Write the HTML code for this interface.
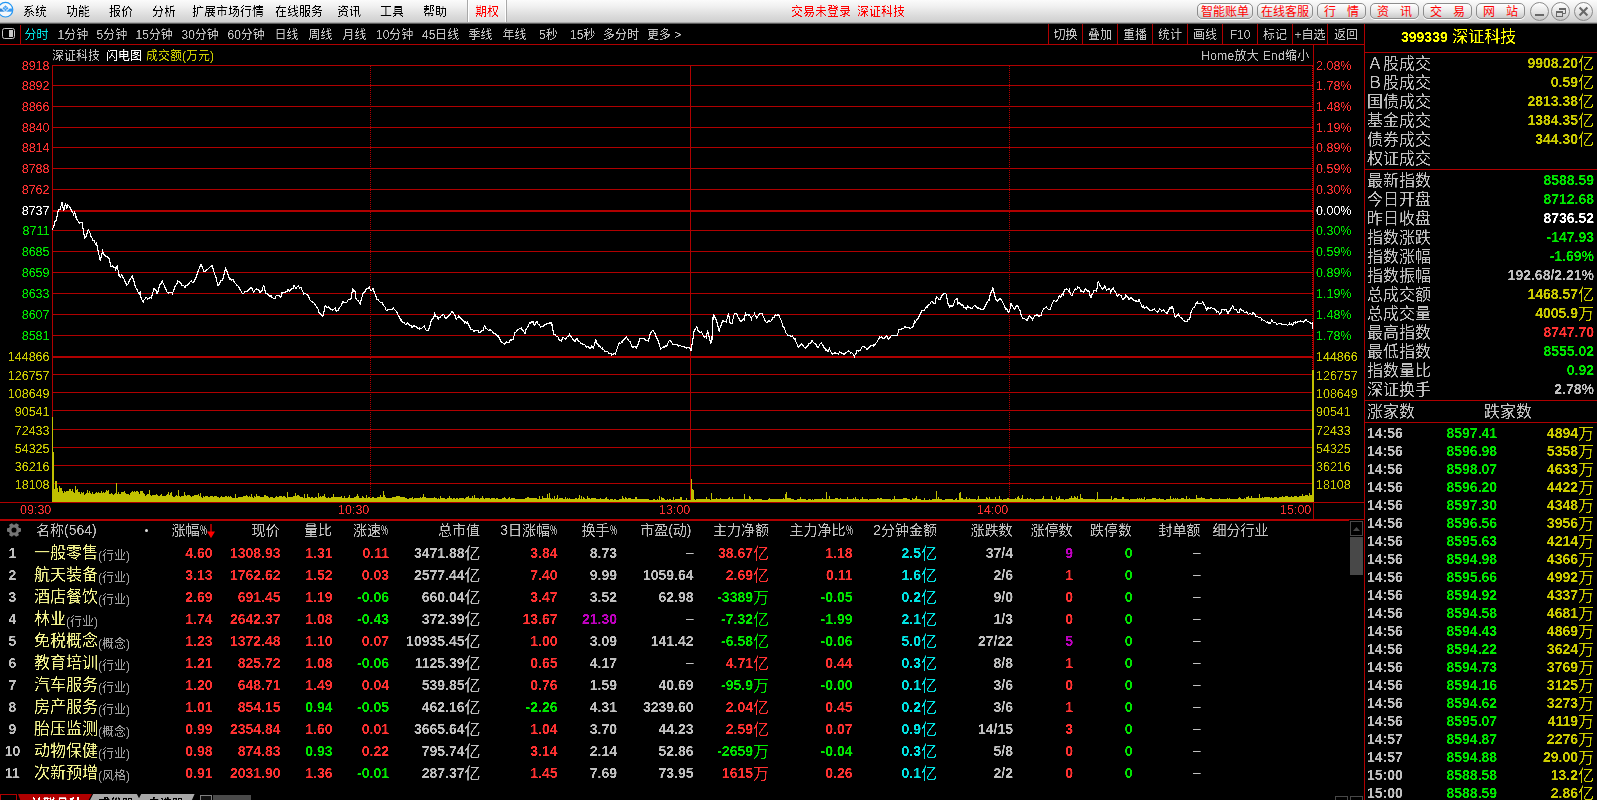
<!DOCTYPE html><html lang="zh-CN"><head><meta charset="utf-8"><title>深证科技 分时</title><style>
*{margin:0;padding:0;box-sizing:border-box}
html,body{width:1597px;height:800px;overflow:hidden;background:#000}
body{position:relative;font-family:"Liberation Sans","Noto Sans CJK SC",sans-serif;color:#c0c0c0}
.t{position:absolute;white-space:nowrap}
.s12{font-size:12px;line-height:14px;height:14px}
.s14{font-size:14px;line-height:16px;height:16px}
.s16{font-size:16px;line-height:18px;height:18px}
.b{font-weight:bold;font-family:"Liberation Sans","Noto Sans CJK SC",sans-serif}
.ax{font-size:12.5px;line-height:14px;height:14px}
.w{color:#fff}.g{color:#c0c0c0}.r{color:#ff3232}.gr{color:#00e600}.y{color:#cccc00}.yy{color:#ffff00}.c{color:#00e4e4}.m{color:#c000c0}.k{color:#000}.ny{color:#f0f08c}.rr{color:#ff0000}
.hl{position:absolute;background:#b00000;height:1px}
.vl{position:absolute;background:#b00000;width:1px}
#menubar{position:absolute;left:0;top:0;width:1597px;height:24px;background:linear-gradient(#fbfbfb 0,#f1f1f1 6px,#e6e6e6 11px,#d9d9d9 17px,#d0d0d0 22px,#acacac 22px,#acacac 23px,#5c5c5c 23px,#5c5c5c 24px)}
.btn{position:absolute;top:3px;height:16px;border:1px solid #8c8c8c;border-radius:5px;background:linear-gradient(#ffffff,#e8e8e8 55%,#cacaca);box-shadow:0 1px 0 #fff;color:#f00;font-size:12px;line-height:15px;text-align:center;padding-top:1px;white-space:nowrap}
.cir{position:absolute;top:1.6px;width:19px;height:19px;border:1px solid #8a8a8a;border-radius:10px;background:linear-gradient(#ffffff,#e0e0e0 60%,#c4c4c4)}
</style></head><body>
<div id="menubar">
<svg style="position:absolute;left:0;top:0" width="16" height="22" viewBox="0 0 16 22"><defs><clipPath id="lc"><circle cx="5.5" cy="9.7" r="7.3"/></clipPath><linearGradient id="lg" x1="0" y1="0" x2="1" y2="0"><stop offset="0" stop-color="#2a6cb8"/><stop offset="0.5" stop-color="#3f9ff2"/><stop offset="1" stop-color="#2f97f5"/></linearGradient></defs><circle cx="5.5" cy="9.7" r="7.3" fill="#f6f8fb" stroke="#2196f3" stroke-width="1.15"/><g clip-path="url(#lc)"><rect x="-3" y="8.5" width="17" height="3.2" fill="url(#lg)"/><path d="M5.5 4.4L9.6 8.5 5.5 12.6 1.4 8.5Z" fill="#f6f8fb"/><path d="M5.5 5.2L8.6 8.3 5.5 11.4 2.4 8.3Z" fill="#4aa3f3"/><path d="M4 6.8l3 3M7 6.8l-3 3" stroke="#d8ecff" stroke-width="0.5"/></g></svg>
<div style="position:absolute;left:467px;top:0;width:40px;height:22px;background:linear-gradient(#fcfcfc,#f0f0f0 50%,#dfdfdf);border-left:1px solid #a8a8a8;border-right:1px solid #a8a8a8;box-shadow:inset 1px 0 0 #fff,inset -1px 0 0 #fff"></div>
<div class="btn" style="left:1197px;width:56px">智能账单</div>
<div class="btn" style="left:1257px;width:56px">在线客服</div>
<div class="btn" style="left:1317px;width:49px">行<span style="display:inline-block;width:11px"></span>情</div>
<div class="btn" style="left:1370px;width:49px">资<span style="display:inline-block;width:11px"></span>讯</div>
<div class="btn" style="left:1423px;width:49px">交<span style="display:inline-block;width:11px"></span>易</div>
<div class="btn" style="left:1476px;width:49px">网<span style="display:inline-block;width:11px"></span>站</div>
<div class="cir" style="left:1529.5px">
<svg width="17" height="17" viewBox="0 0 17 17" style="position:absolute;left:0;top:0"><rect x="4" y="11" width="9" height="2" fill="#686868"/></svg>
</div>
<div class="cir" style="left:1550.5px">
<svg width="17" height="17" viewBox="0 0 17 17" style="position:absolute;left:0;top:0"><path d="M7.5 6.5v-1h6v5h-2.5" fill="none" stroke="#686868" stroke-width="1"/><rect x="7" y="5" width="7" height="2" fill="#686868"/><rect x="4.5" y="8.5" width="6" height="5" fill="none" stroke="#686868" stroke-width="1"/><rect x="4" y="8" width="7" height="2" fill="#686868"/></svg>
</div>
<div class="cir" style="left:1573.5px">
<svg width="17" height="17" viewBox="0 0 17 17" style="position:absolute;left:0;top:0"><path d="M4.6 4.6l7.8 7.8M12.4 4.6l-7.8 7.8" stroke="#686868" stroke-width="2.1"/></svg>
</div>
</div>
<svg style="position:absolute;left:2px;top:28px" width="14" height="12" viewBox="0 0 14 12"><rect x="0.5" y="0.5" width="12" height="10" rx="2" fill="none" stroke="#c8c8c8" stroke-width="1"/><rect x="7" y="2" width="4" height="7" fill="#c8c8c8"/></svg>
<div class="vl" style="left:20px;top:25px;height:19px;width:1px"></div>
<div class="vl" style="left:1048px;top:24px;height:20px;width:1px"></div>
<div class="vl" style="left:1082px;top:24px;height:20px;width:1px"></div>
<div class="vl" style="left:1117px;top:24px;height:20px;width:1px"></div>
<div class="vl" style="left:1152px;top:24px;height:20px;width:1px"></div>
<div class="vl" style="left:1187px;top:24px;height:20px;width:1px"></div>
<div class="vl" style="left:1222px;top:24px;height:20px;width:1px"></div>
<div class="vl" style="left:1257px;top:24px;height:20px;width:1px"></div>
<div class="vl" style="left:1292px;top:24px;height:20px;width:1px"></div>
<div class="vl" style="left:1327px;top:24px;height:20px;width:1px"></div>
<div class="hl" style="left:0px;top:44px;width:1365px;height:1px"></div>
<svg style="position:absolute;left:0;top:0" width="1597" height="800" viewBox="0 0 1597 800" shape-rendering="crispEdges"><rect x="52" y="65" width="1261" height="1" fill="#b00000"/><rect x="52" y="85" width="1261" height="1" fill="#b00000"/><rect x="52" y="106" width="1261" height="1" fill="#b00000"/><rect x="52" y="127" width="1261" height="1" fill="#b00000"/><rect x="52" y="147" width="1261" height="1" fill="#b00000"/><rect x="52" y="168" width="1261" height="1" fill="#b00000"/><rect x="52" y="189" width="1261" height="1" fill="#b00000"/><rect x="52" y="210" width="1261" height="2" fill="#b00000"/><rect x="52" y="230" width="1261" height="1" fill="#b00000"/><rect x="52" y="251" width="1261" height="1" fill="#b00000"/><rect x="52" y="272" width="1261" height="1" fill="#b00000"/><rect x="52" y="293" width="1261" height="1" fill="#b00000"/><rect x="52" y="314" width="1261" height="1" fill="#b00000"/><rect x="52" y="335" width="1261" height="1" fill="#b00000"/><rect x="52" y="356" width="1261" height="2" fill="#b00000"/><rect x="52" y="374" width="1261" height="1" fill="#b00000"/><rect x="52" y="392" width="1261" height="1" fill="#b00000"/><rect x="52" y="410" width="1261" height="1" fill="#b00000"/><rect x="52" y="429" width="1261" height="1" fill="#b00000"/><rect x="52" y="447" width="1261" height="1" fill="#b00000"/><rect x="52" y="465" width="1261" height="1" fill="#b00000"/><rect x="52" y="483" width="1261" height="1" fill="#b00000"/><rect x="0" y="502" width="1365" height="1" fill="#b00000"/><rect x="0" y="519" width="1365" height="2" fill="#b00000"/><rect x="52" y="65" width="1" height="438" fill="#b00000"/><rect x="1313" y="44" width="1" height="476" fill="#b00000"/><rect x="690" y="65" width="1" height="438" fill="#b00000"/><line x1="370.5" y1="66" x2="370.5" y2="502" stroke="#b00000" stroke-width="1" stroke-dasharray="1 1"/><line x1="1009.5" y1="66" x2="1009.5" y2="502" stroke="#b00000" stroke-width="1" stroke-dasharray="1 1"/><line x1="1312.5" y1="66" x2="1312.5" y2="502" stroke="#e00000" stroke-width="1" stroke-dasharray="1 1"/><path d="M52 502V417h1V452h1V489h1V481h1V481h1V488h1V492h1V486h1V488h1V488h1V491h1V493h1V491h1V492h1V491h1V491h1V491h1V489h1V489h1V491h1V489h1V492h1V493h1V486h1V490h1V489h1V492h1V492h1V494h1V492h1V493h1V492h1V495h1V494h1V493h1V490h1V493h1V491h1V493h1V494h1V492h1V494h1V494h1V493h1V492h1V493h1V492h1V493h1V493h1V491h1V493h1V492h1V493h1V492h1V490h1V491h1V490h1V494h1V494h1V493h1V494h1V495h1V494h1V493h1V483h1V494h1V492h1V494h1V494h1V492h1V492h1V492h1V491h1V493h1V494h1V494h1V494h1V495h1V493h1V492h1V491h1V492h1V491h1V492h1V491h1V491h1V492h1V494h1V491h1V491h1V491h1V493h1V494h1V496h1V495h1V494h1V494h1V490h1V495h1V496h1V495h1V495h1V495h1V495h1V494h1V495h1V496h1V496h1V495h1V494h1V496h1V496h1V496h1V496h1V495h1V494h1V492h1V495h1V493h1V492h1V496h1V497h1V497h1V496h1V495h1V496h1V490h1V496h1V497h1V496h1V496h1V496h1V492h1V495h1V496h1V495h1V495h1V495h1V496h1V497h1V496h1V496h1V495h1V495h1V495h1V495h1V494h1V496h1V493h1V497h1V498h1V496h1V497h1V496h1V496h1V496h1V497h1V497h1V496h1V496h1V496h1V497h1V496h1V496h1V496h1V497h1V497h1V498h1V497h1V496h1V497h1V497h1V497h1V496h1V496h1V497h1V496h1V497h1V496h1V497h1V498h1V498h1V498h1V494h1V498h1V498h1V497h1V497h1V497h1V497h1V497h1V496h1V496h1V496h1V495h1V496h1V497h1V496h1V497h1V494h1V497h1V498h1V496h1V497h1V494h1V496h1V496h1V496h1V497h1V497h1V497h1V497h1V495h1V495h1V496h1V496h1V497h1V498h1V497h1V497h1V497h1V498h1V498h1V497h1V496h1V497h1V497h1V496h1V496h1V496h1V497h1V496h1V496h1V497h1V498h1V492h1V497h1V497h1V497h1V497h1V497h1V496h1V496h1V493h1V496h1V495h1V495h1V496h1V497h1V497h1V497h1V498h1V494h1V498h1V498h1V494h1V497h1V497h1V498h1V497h1V497h1V498h1V498h1V497h1V497h1V498h1V493h1V497h1V496h1V497h1V496h1V496h1V494h1V497h1V498h1V498h1V497h1V498h1V498h1V497h1V497h1V494h1V497h1V497h1V497h1V497h1V497h1V497h1V497h1V496h1V498h1V498h1V496h1V498h1V498h1V498h1V497h1V495h1V498h1V498h1V498h1V498h1V497h1V497h1V496h1V494h1V496h1V498h1V498h1V498h1V496h1V497h1V498h1V498h1V495h1V498h1V497h1V497h1V498h1V498h1V497h1V497h1V498h1V498h1V498h1V497h1V497h1V497h1V495h1V497h1V497h1V491h1V495h1V497h1V498h1V498h1V498h1V498h1V498h1V498h1V497h1V497h1V497h1V497h1V496h1V496h1V496h1V496h1V497h1V497h1V497h1V497h1V497h1V498h1V498h1V499h1V499h1V498h1V498h1V498h1V497h1V499h1V498h1V498h1V498h1V498h1V498h1V498h1V497h1V498h1V497h1V494h1V497h1V497h1V498h1V498h1V498h1V498h1V498h1V498h1V498h1V498h1V497h1V498h1V498h1V499h1V498h1V499h1V496h1V498h1V498h1V498h1V498h1V499h1V499h1V498h1V498h1V496h1V498h1V498h1V499h1V498h1V498h1V499h1V498h1V498h1V499h1V498h1V498h1V498h1V498h1V498h1V499h1V498h1V497h1V497h1V496h1V498h1V498h1V498h1V496h1V498h1V495h1V498h1V498h1V498h1V498h1V499h1V498h1V498h1V496h1V498h1V499h1V498h1V498h1V498h1V498h1V498h1V499h1V498h1V498h1V498h1V498h1V499h1V498h1V498h1V499h1V499h1V499h1V499h1V498h1V498h1V497h1V498h1V499h1V499h1V498h1V497h1V499h1V498h1V498h1V498h1V498h1V499h1V499h1V499h1V499h1V499h1V499h1V499h1V499h1V499h1V499h1V498h1V498h1V497h1V497h1V498h1V498h1V498h1V498h1V498h1V498h1V498h1V498h1V499h1V499h1V496h1V499h1V499h1V496h1V498h1V498h1V498h1V498h1V494h1V498h1V493h1V498h1V499h1V498h1V499h1V496h1V499h1V498h1V495h1V499h1V498h1V498h1V498h1V498h1V499h1V499h1V497h1V499h1V498h1V499h1V498h1V499h1V499h1V499h1V499h1V499h1V498h1V498h1V499h1V498h1V495h1V499h1V496h1V499h1V497h1V498h1V499h1V499h1V496h1V498h1V498h1V499h1V498h1V498h1V498h1V498h1V498h1V499h1V499h1V499h1V499h1V498h1V499h1V499h1V499h1V499h1V498h1V497h1V499h1V499h1V500h1V499h1V499h1V499h1V500h1V499h1V499h1V500h1V500h1V500h1V499h1V499h1V499h1V496h1V498h1V499h1V497h1V498h1V499h1V498h1V498h1V498h1V499h1V499h1V499h1V499h1V497h1V497h1V499h1V499h1V499h1V499h1V499h1V499h1V499h1V499h1V499h1V499h1V499h1V499h1V500h1V500h1V500h1V500h1V499h1V499h1V500h1V500h1V499h1V500h1V496h1V500h1V497h1V498h1V498h1V499h1V500h1V500h1V499h1V500h1V499h1V499h1V500h1V500h1V497h1V500h1V499h1V499h1V499h1V499h1V499h1V497h1V497h1V500h1V500h1V500h1V500h1V498h1V500h1V500h1V500h1V500h1V479h1V489h1V490h1V499h1V500h1V499h1V499h1V499h1V499h1V499h1V499h1V499h1V499h1V499h1V499h1V497h1V499h1V499h1V499h1V500h1V493h1V499h1V499h1V499h1V499h1V498h1V499h1V499h1V499h1V498h1V499h1V499h1V499h1V499h1V499h1V499h1V499h1V498h1V497h1V499h1V499h1V497h1V499h1V499h1V499h1V499h1V499h1V499h1V499h1V499h1V499h1V499h1V499h1V494h1V499h1V499h1V499h1V499h1V496h1V497h1V499h1V499h1V500h1V499h1V499h1V499h1V499h1V499h1V499h1V499h1V499h1V500h1V500h1V500h1V500h1V500h1V500h1V499h1V498h1V499h1V499h1V499h1V499h1V499h1V499h1V499h1V499h1V499h1V499h1V499h1V499h1V499h1V498h1V499h1V494h1V492h1V498h1V498h1V498h1V498h1V499h1V499h1V499h1V500h1V500h1V500h1V499h1V499h1V499h1V497h1V499h1V499h1V499h1V499h1V499h1V500h1V500h1V499h1V499h1V499h1V500h1V499h1V500h1V499h1V499h1V499h1V499h1V499h1V499h1V499h1V499h1V498h1V499h1V499h1V499h1V492h1V499h1V499h1V496h1V499h1V499h1V499h1V499h1V499h1V498h1V498h1V498h1V499h1V499h1V498h1V499h1V499h1V499h1V499h1V499h1V499h1V497h1V499h1V499h1V499h1V499h1V499h1V498h1V499h1V497h1V499h1V499h1V499h1V500h1V499h1V499h1V497h1V499h1V499h1V499h1V499h1V499h1V500h1V499h1V499h1V499h1V499h1V499h1V499h1V499h1V499h1V498h1V498h1V499h1V498h1V498h1V499h1V499h1V499h1V499h1V499h1V499h1V499h1V499h1V499h1V500h1V499h1V499h1V496h1V499h1V499h1V499h1V499h1V499h1V499h1V499h1V499h1V498h1V498h1V498h1V498h1V499h1V499h1V499h1V500h1V500h1V498h1V499h1V499h1V498h1V496h1V499h1V499h1V499h1V499h1V500h1V500h1V500h1V498h1V500h1V500h1V500h1V500h1V499h1V500h1V500h1V499h1V499h1V499h1V499h1V491h1V499h1V497h1V499h1V499h1V499h1V500h1V500h1V500h1V499h1V499h1V499h1V499h1V499h1V499h1V499h1V499h1V500h1V500h1V499h1V498h1V500h1V500h1V493h1V492h1V498h1V498h1V499h1V499h1V499h1V497h1V499h1V499h1V498h1V499h1V499h1V499h1V499h1V499h1V499h1V500h1V499h1V496h1V499h1V499h1V499h1V499h1V499h1V499h1V499h1V497h1V498h1V499h1V497h1V499h1V499h1V499h1V499h1V499h1V497h1V499h1V499h1V499h1V496h1V499h1V499h1V500h1V499h1V499h1V499h1V499h1V498h1V498h1V499h1V499h1V499h1V499h1V499h1V499h1V498h1V499h1V497h1V496h1V498h1V499h1V498h1V495h1V499h1V499h1V499h1V499h1V498h1V499h1V499h1V498h1V499h1V499h1V499h1V500h1V499h1V499h1V499h1V499h1V499h1V499h1V499h1V498h1V496h1V499h1V499h1V499h1V499h1V499h1V499h1V499h1V496h1V499h1V500h1V500h1V500h1V497h1V499h1V498h1V496h1V499h1V499h1V499h1V499h1V500h1V499h1V499h1V499h1V499h1V498h1V498h1V496h1V498h1V498h1V496h1V497h1V498h1V496h1V499h1V499h1V494h1V498h1V498h1V499h1V499h1V499h1V499h1V499h1V499h1V499h1V499h1V499h1V499h1V499h1V499h1V500h1V499h1V492h1V499h1V499h1V499h1V499h1V499h1V499h1V499h1V499h1V499h1V499h1V499h1V499h1V499h1V496h1V500h1V499h1V498h1V498h1V498h1V499h1V499h1V499h1V499h1V499h1V497h1V497h1V499h1V499h1V499h1V499h1V499h1V500h1V499h1V499h1V499h1V499h1V499h1V499h1V499h1V498h1V499h1V498h1V499h1V498h1V499h1V499h1V497h1V500h1V499h1V499h1V499h1V499h1V499h1V499h1V498h1V498h1V498h1V498h1V499h1V499h1V499h1V498h1V499h1V499h1V499h1V499h1V500h1V500h1V499h1V499h1V499h1V499h1V496h1V499h1V499h1V498h1V499h1V498h1V499h1V498h1V499h1V499h1V499h1V498h1V498h1V498h1V499h1V499h1V496h1V499h1V499h1V498h1V499h1V499h1V499h1V499h1V499h1V499h1V495h1V498h1V498h1V498h1V498h1V497h1V498h1V498h1V498h1V499h1V499h1V499h1V499h1V499h1V498h1V498h1V499h1V499h1V499h1V499h1V499h1V499h1V499h1V498h1V499h1V499h1V499h1V499h1V499h1V499h1V499h1V498h1V499h1V498h1V499h1V499h1V499h1V499h1V499h1V499h1V499h1V499h1V498h1V497h1V498h1V499h1V499h1V499h1V498h1V499h1V497h1V497h1V496h1V498h1V498h1V496h1V498h1V498h1V498h1V498h1V498h1V498h1V498h1V494h1V498h1V498h1V497h1V498h1V497h1V497h1V497h1V497h1V497h1V497h1V498h1V497h1V498h1V498h1V497h1V497h1V497h1V498h1V498h1V497h1V497h1V497h1V496h1V497h1V497h1V496h1V496h1V496h1V497h1V497h1V497h1V496h1V497h1V497h1V496h1V496h1V496h1V497h1V497h1V496h1V496h1V496h1V494h1V496h1V496h1V495h1V495h1V495h1V496h1V493h1V495h1V495h1V370h1V370h1V502Z" fill="#c0c000"/><path d="M52.2 229.7L52.2 229.8L53.5 227.2L54.7 223.1L54.8 222.1L56.1 220.3L56.6 218.4L57.4 214.3L58.4 210.0L58.8 209.5L60.1 209.8L60.3 208.1L61.4 204.8L62.2 202.1L62.7 205.3L63.5 210.9L64.0 209.4L65.3 204.2L65.4 202.9L66.6 207.1L66.9 208.1L67.8 204.4L67.9 205.0L69.2 206.1L70.5 208.7L70.6 209.1L71.9 211.3L73.2 213.2L73.4 214.7L74.5 212.2L74.9 212.8L75.8 215.4L76.2 218.4L77.1 219.7L78.4 221.8L79.1 223.1L79.7 222.7L81.0 222.5L81.9 222.2L82.3 223.6L83.6 232.0L84.7 238.1L85.0 237.9L86.3 236.2L86.5 235.3L87.6 231.5L88.4 229.7L88.9 230.8L90.2 233.5L90.3 235.3L91.5 237.3L92.8 238.7L93.1 240.9L94.1 240.9L95.4 244.1L96.7 242.9L96.9 244.7L98.1 250.8L99.4 256.8L100.2 260.6L100.7 258.4L102.0 253.4L102.5 250.9L103.3 253.0L104.4 255.0L104.6 255.9L105.9 256.0L107.2 256.8L108.5 257.9L109.0 258.7L109.8 261.3L110.9 266.2L111.2 266.2L112.5 266.0L113.8 267.8L114.7 267.2L115.1 267.4L115.6 270.9L116.4 267.4L117.1 265.9L117.7 268.2L119.0 275.6L119.0 274.0L120.3 277.6L121.6 275.0L122.9 277.2L123.1 277.5L124.3 279.4L125.6 283.6L126.9 283.5L126.9 285.0L128.2 283.7L129.5 280.3L130.8 278.6L132.1 276.1L132.5 276.0L133.4 280.0L134.7 283.7L135.3 286.8L136.0 287.9L137.4 290.3L138.7 293.5L140.0 292.4L140.0 294.3L141.3 298.4L142.6 301.1L143.2 301.8L143.9 300.2L145.2 298.6L145.6 297.7L146.5 297.4L147.8 299.1L149.1 298.1L150.5 297.9L151.2 298.1L151.8 296.0L153.1 291.7L154.0 288.7L154.4 289.0L155.7 289.9L157.0 293.5L157.8 292.8L158.3 289.9L159.6 285.0L160.9 284.0L162.1 280.8L162.2 281.0L163.6 284.4L164.9 287.0L166.2 290.0L167.2 292.5L167.5 292.7L168.8 293.2L170.1 292.2L171.4 292.2L172.7 294.0L172.8 292.5L174.0 289.8L175.3 285.4L176.7 284.7L177.5 280.8L178.0 281.8L179.3 282.0L180.6 282.8L181.9 285.1L183.2 285.5L184.5 286.5L185.0 287.8L185.8 285.9L187.1 285.1L188.4 284.8L189.8 282.2L190.6 281.6L191.1 280.7L192.4 282.8L193.4 282.7L193.7 282.1L195.0 279.5L196.3 276.6L197.6 272.5L198.9 269.3L200.2 266.3L200.9 264.7L201.5 265.1L202.9 268.9L204.2 272.0L204.6 271.8L205.5 271.2L206.8 269.9L208.1 268.8L209.4 267.4L210.7 266.3L212.0 265.6L212.1 265.8L213.3 269.3L214.6 274.0L216.0 277.5L217.3 283.3L218.1 285.9L218.6 285.3L219.9 282.7L221.2 280.2L222.4 280.3L222.5 279.9L223.8 275.9L225.1 269.7L225.6 268.5L226.4 270.2L227.7 273.4L229.1 277.7L229.9 279.3L230.4 278.6L231.7 280.0L232.7 279.3L233.0 279.5L234.3 282.2L235.6 283.4L236.9 285.1L238.2 286.0L239.5 288.4L240.8 290.6L242.2 293.2L243.1 294.0L243.5 293.9L244.8 292.0L245.9 291.5L246.1 291.7L247.4 291.2L248.7 289.5L250.0 288.7L250.0 288.4L251.3 287.2L251.6 287.3L252.6 290.2L253.8 292.1L253.9 292.3L255.3 289.6L256.6 289.0L256.6 288.7L257.9 289.6L259.2 290.8L259.9 292.1L260.5 292.4L261.8 290.7L262.4 289.4L263.1 286.7L263.7 285.5L264.4 288.1L265.7 292.9L265.8 292.8L267.0 293.4L268.4 294.9L269.7 296.6L270.6 296.9L271.0 295.7L272.3 297.7L273.6 298.5L274.7 298.3L274.9 298.5L276.2 295.8L277.5 295.5L277.5 295.7L278.8 295.4L280.1 297.0L280.9 296.9L281.5 295.1L281.9 292.8L282.8 293.0L284.1 292.2L285.0 292.8L285.4 292.0L286.7 291.8L287.8 290.0L288.0 289.4L289.3 291.1L289.9 291.0L290.6 290.4L291.9 288.1L293.2 288.3L294.0 285.5L294.6 286.1L295.9 288.8L296.7 288.0L297.2 286.4L298.5 286.0L299.8 288.2L300.9 287.3L301.1 288.2L302.4 290.5L303.7 293.7L303.9 294.2L305.0 293.0L306.3 294.3L307.7 294.3L307.7 295.1L309.0 297.7L309.8 299.7L310.3 300.7L311.6 301.2L312.9 302.4L313.2 302.4L314.2 303.2L315.5 305.1L316.8 307.2L317.4 307.9L318.1 309.4L319.4 313.5L320.1 314.1L320.8 313.7L322.1 316.2L323.3 315.2L323.4 314.1L324.7 308.1L324.9 306.1L326.0 305.8L327.3 307.9L328.6 307.0L329.0 307.0L329.9 308.2L331.2 309.7L332.5 310.3L332.5 309.8L333.9 309.0L335.2 307.8L335.2 309.3L336.5 311.0L337.8 310.4L338.0 311.1L339.1 308.5L340.4 306.4L341.7 305.4L342.1 303.1L343.0 301.6L344.3 302.9L345.6 302.2L346.2 302.4L347.0 302.2L348.3 299.3L349.6 299.2L350.9 299.0L351.0 298.3L352.2 291.0L352.4 288.3L353.5 291.0L354.8 290.9L355.2 292.1L356.1 299.0L356.1 299.1L357.4 300.6L358.7 301.2L360.0 303.8L360.1 302.5L361.4 299.5L362.7 294.5L362.7 294.2L364.0 292.2L365.3 291.2L365.5 290.0L366.6 288.5L367.9 288.7L369.2 287.4L369.3 287.3L370.5 289.9L371.0 291.0L371.8 290.2L373.0 288.3L373.2 288.9L374.5 292.6L375.1 294.2L375.8 295.8L377.1 299.7L377.8 299.7L378.4 299.9L379.7 301.9L381.0 302.6L382.3 302.9L382.6 303.4L383.6 305.8L384.9 306.8L386.3 310.6L386.8 310.7L387.6 309.7L388.9 309.3L389.5 309.3L390.2 309.3L391.5 309.2L392.8 308.9L393.6 307.9L394.1 309.3L395.4 310.4L396.7 311.8L397.8 314.1L398.0 315.0L399.4 317.3L400.5 319.3L400.7 318.8L402.0 321.6L403.3 322.4L404.6 322.9L405.3 324.4L405.9 324.5L407.2 322.8L408.1 323.5L408.5 323.3L409.8 325.7L411.1 325.6L412.2 327.9L412.5 327.7L413.8 325.3L414.3 325.8L415.1 326.9L416.4 326.7L417.7 328.3L419.0 328.0L419.1 329.2L420.3 328.2L421.6 328.4L422.9 327.2L423.5 326.5L424.2 326.0L425.6 329.7L426.6 330.3L426.9 330.9L428.2 329.7L428.4 329.9L429.5 327.6L430.8 321.6L430.8 322.4L432.1 319.6L433.4 317.8L434.7 315.2L434.9 313.8L436.0 316.5L437.3 316.6L438.3 318.9L438.7 317.3L440.0 317.8L441.3 315.3L442.6 315.1L443.1 314.8L443.9 314.7L445.2 318.0L445.9 318.0L446.5 318.1L447.8 316.9L449.1 315.5L450.0 314.8L450.4 314.1L451.8 311.7L452.1 311.4L453.1 312.9L454.4 314.4L454.8 314.8L455.7 318.2L456.2 319.6L457.0 317.9L458.3 317.3L458.5 315.5L459.6 316.6L460.9 318.6L461.7 318.2L462.2 320.0L463.5 320.4L464.4 322.4L464.9 321.2L466.2 323.5L467.5 322.3L467.6 322.6L468.8 325.3L470.1 327.9L470.6 329.2L471.4 329.8L472.7 329.6L474.0 331.2L474.1 331.3L475.3 330.5L476.1 330.6L476.6 330.9L478.0 330.0L478.9 332.3L479.3 332.8L480.6 332.0L481.9 330.0L483.0 330.9L483.2 329.7L484.4 325.8L484.5 325.9L485.8 328.0L487.1 329.2L487.1 329.2L488.4 330.6L489.7 329.9L489.9 329.9L491.1 330.0L492.4 331.3L493.7 333.4L494.0 333.1L495.0 333.2L496.3 335.0L497.6 335.9L498.1 335.4L498.9 337.4L500.2 340.2L501.5 341.9L501.5 341.8L502.8 342.9L504.2 343.5L504.3 344.1L505.5 343.2L506.8 342.0L508.1 342.3L509.1 342.3L509.4 341.3L510.7 340.0L512.0 340.1L513.2 339.1L513.3 339.0L514.6 333.4L514.6 333.1L515.9 332.4L517.3 330.1L517.4 329.2L518.6 329.7L519.9 328.1L520.1 328.5L521.2 328.1L522.5 330.5L522.9 330.3L523.8 331.6L525.1 333.4L525.3 333.1L526.3 328.5L526.4 328.6L527.7 327.1L529.0 323.9L529.7 323.0L530.4 323.4L531.7 322.0L532.5 322.6L533.0 321.6L534.1 325.1L534.3 324.5L535.6 323.9L536.3 321.7L536.9 321.1L538.2 324.6L538.7 324.4L539.5 325.0L540.7 327.2L540.8 326.9L542.1 326.9L543.4 326.7L543.5 326.5L544.8 324.7L546.1 324.5L546.9 323.7L547.4 323.9L548.7 323.9L550.0 322.4L551.3 323.9L551.7 322.6L552.6 329.6L552.8 329.2L553.9 334.5L554.5 334.5L555.2 334.3L556.5 336.8L557.9 336.7L558.6 338.9L559.2 339.6L560.5 340.8L561.6 341.3L561.8 340.1L563.1 337.1L563.4 337.7L564.4 338.3L565.5 338.6L565.7 338.9L567.0 337.0L568.3 336.6L569.6 334.1L569.9 335.8L571.0 336.5L572.3 338.7L573.6 340.2L573.7 340.2L574.9 341.4L576.2 339.3L577.5 338.5L577.8 340.2L578.8 341.6L580.1 342.1L580.6 343.0L581.4 343.5L582.7 344.2L584.1 344.5L584.7 344.3L585.4 346.0L586.7 347.0L588.0 345.9L589.3 348.3L589.5 348.5L590.6 348.5L591.6 345.7L591.9 345.7L593.2 348.1L593.6 347.8L594.5 344.2L595.7 339.9L595.8 339.9L597.2 343.7L598.5 345.7L598.5 345.0L599.8 346.1L601.1 348.3L602.4 348.0L602.6 349.2L603.7 349.4L605.0 351.5L606.3 351.7L606.7 351.9L607.6 351.5L608.9 353.2L610.3 353.7L611.5 354.0L611.6 355.0L612.9 354.5L614.2 353.3L615.5 353.0L615.6 353.3L616.8 349.6L618.1 345.7L619.1 343.0L619.4 343.9L620.7 343.3L621.8 341.6L622.0 342.3L623.4 340.2L624.7 338.3L626.0 337.7L626.2 336.8L627.3 338.3L628.6 340.9L628.7 340.9L629.9 341.4L631.2 344.2L632.5 347.5L633.5 347.8L633.8 347.0L635.1 346.7L636.3 347.8L636.5 347.3L637.8 345.2L639.1 341.5L639.7 338.8L640.4 338.4L641.7 338.1L643.0 338.1L643.1 338.2L644.3 338.7L645.6 340.7L645.9 340.9L646.9 340.7L648.2 339.8L648.6 340.9L649.6 336.1L650.0 334.5L650.9 333.0L652.2 330.5L652.5 330.6L653.5 330.9L654.8 333.9L655.5 334.0L656.1 337.1L657.4 339.1L658.7 342.6L660.0 346.9L661.0 349.2L661.3 348.7L662.7 347.1L663.7 346.8L664.0 347.8L665.3 346.0L666.5 346.8L666.6 346.1L667.9 343.4L669.2 340.4L669.5 340.5L670.5 341.1L671.8 342.8L673.1 344.4L674.1 344.1L674.4 344.8L675.8 344.9L677.1 344.5L678.2 346.0L678.4 346.0L679.7 345.3L681.0 345.9L682.3 346.7L683.0 346.0L683.6 346.6L684.9 347.1L686.2 347.5L686.4 348.2L687.5 347.9L688.9 347.6L689.2 347.4L690.2 348.4L691.0 350.5L691.5 347.1L692.8 339.8L693.7 333.4L694.1 331.2L695.4 329.1L696.7 326.5L696.7 325.7L698.0 330.7L698.8 331.3L699.3 331.9L700.6 332.2L701.5 332.0L702.0 333.2L703.3 335.5L704.3 337.2L704.6 337.4L705.9 336.0L706.4 337.2L707.2 332.4L707.5 330.3L708.5 335.1L709.8 339.2L710.5 343.2L711.1 342.5L711.9 340.2L712.4 330.3L713.2 315.2L713.7 315.0L715.1 317.9L716.4 320.2L716.7 321.0L717.7 324.8L719.0 331.1L719.1 331.3L720.3 326.9L721.6 323.9L722.9 320.3L722.9 320.5L724.2 321.5L725.5 321.7L726.3 322.1L726.8 319.6L728.2 314.9L728.4 313.4L729.5 319.1L729.7 322.1L730.8 323.4L732.1 323.3L732.1 323.5L733.4 317.1L734.5 313.4L734.7 313.3L736.0 313.5L737.3 314.7L738.0 316.9L738.6 317.8L739.9 319.9L740.4 321.3L741.3 321.5L742.6 319.7L743.9 318.8L744.2 319.6L745.2 314.2L745.5 313.4L746.5 315.2L747.8 314.6L749.0 315.2L749.1 314.9L750.4 316.7L751.4 318.9L751.7 317.5L753.0 316.1L754.4 314.4L754.5 313.8L755.7 316.3L756.9 317.1L757.0 317.9L758.3 315.6L759.6 313.4L760.0 313.4L760.9 313.6L762.2 313.6L762.7 315.8L763.5 316.6L764.8 320.2L766.1 322.1L766.2 322.4L767.5 322.3L768.8 320.6L770.1 321.9L771.0 321.0L771.4 320.5L772.7 318.1L773.0 317.5L774.0 317.4L775.3 314.9L776.6 315.7L777.9 314.9L779.2 315.1L779.2 316.6L780.6 319.0L781.9 322.6L782.6 325.1L783.2 327.0L784.5 328.3L785.8 332.9L787.1 334.1L787.5 335.4L788.4 335.6L789.7 335.3L791.0 336.9L791.6 336.4L792.3 335.5L793.7 338.8L795.0 338.9L795.0 339.5L796.3 342.6L797.6 344.8L798.2 347.1L798.9 346.6L800.2 345.4L801.5 344.5L801.9 343.7L802.8 345.2L804.1 347.2L804.6 347.4L805.4 348.0L806.8 346.6L807.4 346.8L808.1 345.0L809.4 343.2L810.7 343.0L812.0 340.5L812.2 340.5L813.3 342.5L814.6 343.3L815.9 344.0L817.2 346.9L817.4 346.4L818.5 346.9L819.9 344.1L821.1 343.2L821.2 342.6L822.5 344.5L823.8 347.7L825.1 348.5L825.9 350.1L826.4 350.0L827.7 351.3L828.7 351.2L829.0 349.9L829.4 348.5L830.3 350.6L831.6 352.8L832.1 354.2L833.0 353.2L834.3 353.1L834.9 352.6L835.6 353.0L836.9 354.0L838.2 353.8L838.3 354.2L839.5 352.5L839.7 351.9L840.8 352.8L842.1 353.2L843.4 354.2L843.8 354.0L844.7 354.1L846.1 352.6L847.4 351.6L847.9 351.2L848.7 350.7L850.0 352.1L850.0 351.9L851.3 352.7L852.6 353.4L852.7 353.7L853.9 355.0L854.4 356.4L855.2 354.6L856.5 352.6L856.6 350.5L857.8 351.0L859.2 350.9L859.6 350.9L860.5 349.9L861.8 347.2L862.6 346.4L863.1 346.8L864.4 347.0L865.7 347.8L867.0 349.3L867.2 349.2L868.3 348.3L869.6 346.9L870.9 345.1L871.3 345.4L872.3 345.9L873.4 346.0L873.6 345.0L874.9 345.0L876.2 342.7L876.8 342.3L877.5 340.9L878.8 338.9L879.6 336.8L880.1 337.5L881.4 336.8L882.7 338.3L883.0 338.6L884.0 338.3L885.4 336.6L885.7 337.2L886.7 336.1L888.0 338.7L888.5 339.1L889.3 338.1L890.6 336.9L891.2 335.8L891.9 335.7L893.2 335.5L894.5 335.4L895.8 336.0L897.1 335.1L897.4 334.7L898.5 331.5L898.8 329.9L899.8 329.2L901.1 329.8L902.4 328.3L903.7 328.4L904.3 327.6L905.0 326.1L906.3 327.9L907.6 327.7L908.9 327.5L909.1 327.9L910.2 328.6L911.6 327.5L912.9 326.8L913.2 326.8L914.2 323.1L914.9 321.0L915.5 321.9L916.8 319.8L918.1 318.5L918.7 317.5L919.4 315.2L920.7 313.5L921.5 310.7L922.0 311.0L923.3 310.2L924.2 310.3L924.7 309.7L926.0 307.0L927.3 307.1L927.7 306.1L928.6 304.2L929.9 304.1L931.1 302.0L931.2 301.7L932.5 302.0L933.8 303.2L935.1 303.5L935.2 303.4L936.4 296.4L936.6 296.5L937.8 297.7L939.1 299.6L940.0 300.1L940.4 299.2L941.7 296.1L943.0 294.5L943.5 293.8L944.3 293.2L945.6 293.7L946.2 294.2L946.9 298.1L947.9 303.1L948.2 303.8L949.5 306.7L949.7 307.2L950.9 305.4L952.2 306.3L953.1 305.6L953.5 304.4L954.8 300.5L955.2 299.7L956.1 299.4L957.2 298.7L957.4 301.7L957.9 303.8L958.7 303.0L960.0 303.0L961.3 305.0L962.0 304.5L962.6 304.6L964.0 307.5L965.3 307.2L966.2 308.9L966.6 307.9L967.9 306.7L967.9 306.1L969.2 307.6L970.5 308.0L971.6 308.3L971.8 308.5L973.1 307.0L974.4 305.8L975.1 305.6L975.7 305.9L977.1 307.9L978.4 308.3L978.5 307.9L979.7 308.5L981.0 309.4L981.3 309.3L982.3 309.4L983.6 309.0L984.7 307.5L984.9 306.9L986.2 304.2L986.8 303.1L987.5 302.1L988.8 299.7L988.8 301.4L990.2 294.4L990.5 292.8L991.5 292.2L992.8 287.9L993.0 288.7L994.1 293.1L994.3 293.2L995.4 298.3L995.4 299.3L996.7 299.8L997.8 301.7L998.0 300.9L999.3 299.0L999.8 298.3L1000.6 299.3L1001.9 300.4L1001.9 300.8L1003.3 303.6L1004.6 306.1L1004.6 306.5L1005.9 309.7L1006.7 308.6L1007.2 309.9L1008.5 312.6L1008.8 312.7L1009.8 310.1L1011.1 303.4L1011.1 304.2L1012.4 306.0L1013.7 307.9L1014.3 308.6L1015.0 309.2L1016.4 305.5L1017.0 305.6L1017.7 305.9L1019.0 308.8L1019.8 310.0L1020.3 310.5L1021.5 316.9L1021.6 316.4L1022.9 318.6L1024.2 318.3L1024.6 318.9L1025.5 319.3L1026.8 320.2L1027.6 319.9L1028.1 317.9L1029.4 316.2L1029.5 316.5L1030.8 317.4L1032.1 318.6L1032.5 319.9L1033.4 318.1L1034.7 315.8L1034.9 315.5L1036.0 315.1L1037.3 314.9L1038.6 316.0L1039.9 316.1L1041.1 315.2L1041.2 315.1L1042.4 310.7L1042.6 310.5L1043.9 308.7L1045.2 307.9L1045.9 307.9L1046.5 307.3L1047.8 308.7L1049.1 309.7L1050.0 309.3L1050.4 308.9L1051.7 304.8L1052.1 303.8L1053.0 301.9L1054.1 300.4L1054.3 300.7L1055.7 301.3L1056.2 301.5L1057.0 300.4L1058.3 298.4L1058.5 296.9L1059.6 295.9L1060.9 297.4L1062.2 293.7L1063.1 294.9L1063.5 292.6L1064.8 289.8L1065.4 289.6L1066.1 288.8L1067.4 289.3L1068.8 291.0L1069.2 289.4L1070.1 292.7L1070.3 294.2L1071.4 295.5L1072.3 295.1L1072.7 293.8L1074.0 290.9L1074.1 290.5L1075.3 288.6L1076.6 289.8L1077.9 286.9L1077.9 286.9L1079.2 287.9L1080.2 289.4L1080.5 291.4L1081.9 290.8L1083.2 292.0L1083.7 292.1L1084.5 290.1L1085.1 288.7L1085.8 289.2L1087.1 290.7L1087.1 291.8L1088.4 291.1L1088.8 291.0L1089.7 294.8L1091.0 297.3L1091.0 297.5L1092.3 294.0L1093.6 291.9L1093.7 291.0L1095.0 289.9L1096.3 291.2L1096.7 290.0L1097.6 284.8L1098.1 281.8L1098.9 282.6L1100.2 286.2L1101.1 287.3L1101.5 288.2L1102.8 289.1L1102.9 289.4L1104.1 287.2L1104.7 285.9L1105.4 287.8L1106.7 290.1L1107.0 289.4L1108.1 289.3L1109.4 288.5L1110.5 291.0L1110.7 292.3L1112.0 289.3L1113.2 288.3L1113.3 288.2L1114.6 291.2L1115.7 292.8L1115.9 292.9L1117.2 296.3L1117.6 296.2L1118.5 294.7L1119.8 294.9L1119.8 294.8L1121.2 295.6L1122.5 299.2L1123.5 299.3L1123.8 298.6L1125.1 297.2L1125.9 294.9L1126.4 296.6L1127.7 296.6L1129.0 299.3L1129.0 299.1L1130.3 298.6L1130.8 297.6L1131.6 298.3L1132.9 299.2L1134.3 300.9L1135.2 301.0L1135.6 301.7L1136.9 300.9L1138.0 301.5L1138.2 301.0L1139.1 299.3L1139.5 300.7L1140.8 303.6L1142.1 306.6L1142.4 307.2L1143.4 306.3L1144.7 308.4L1146.0 306.9L1146.9 307.0L1147.4 307.7L1148.7 309.0L1150.0 310.6L1150.1 310.7L1151.3 310.8L1152.4 310.7L1152.6 309.9L1153.9 309.5L1154.5 308.6L1155.2 310.3L1156.5 311.2L1157.5 312.0L1157.8 312.1L1159.1 310.0L1159.7 308.9L1160.5 309.2L1161.8 311.1L1163.1 309.8L1164.1 310.7L1164.4 311.2L1165.7 312.7L1167.0 313.2L1167.5 313.4L1168.3 310.9L1169.6 308.1L1170.3 307.5L1170.9 308.5L1172.2 306.4L1172.6 307.0L1173.6 311.2L1174.4 314.8L1174.9 316.3L1175.4 317.1L1176.2 316.8L1177.5 314.7L1178.5 315.5L1178.8 314.4L1180.1 317.0L1181.4 317.8L1182.7 319.5L1183.3 320.3L1184.0 320.8L1185.3 321.7L1186.7 321.3L1186.8 322.4L1188.0 319.3L1189.3 319.1L1190.2 316.9L1190.6 314.1L1190.9 312.7L1191.9 310.3L1193.2 307.7L1194.3 307.5L1194.5 307.5L1195.8 303.4L1196.8 302.4L1197.1 301.8L1198.4 303.9L1199.1 303.8L1199.8 303.8L1201.1 303.6L1202.3 302.8L1202.4 302.0L1203.7 302.4L1204.2 305.2L1205.0 306.1L1206.3 309.3L1206.7 310.3L1207.6 307.8L1208.1 307.2L1208.9 308.1L1210.2 308.1L1211.5 307.4L1212.9 308.9L1214.2 308.8L1214.3 308.9L1215.5 309.7L1216.8 312.2L1218.1 311.4L1219.3 313.8L1219.4 314.5L1220.7 313.2L1222.0 309.6L1223.3 309.8L1223.5 309.8L1224.6 310.0L1226.0 309.7L1226.2 310.6L1227.3 311.8L1228.1 313.5L1228.6 312.1L1229.9 310.6L1231.2 308.0L1231.9 307.2L1232.5 305.8L1233.8 307.8L1233.8 308.7L1235.1 309.8L1236.4 309.9L1237.7 312.5L1238.1 312.2L1239.1 312.5L1240.0 309.8L1240.4 308.8L1241.7 310.3L1243.0 310.8L1244.3 312.2L1245.6 312.2L1246.2 312.8L1246.9 311.9L1248.2 314.3L1249.4 313.8L1249.5 313.5L1250.8 313.8L1252.2 314.6L1252.5 312.8L1253.5 313.0L1254.8 314.4L1256.1 316.5L1256.9 316.5L1257.4 316.6L1258.7 317.6L1260.0 317.6L1261.2 318.1L1261.3 320.3L1262.6 319.7L1263.9 320.4L1265.0 321.0L1265.3 321.3L1266.6 322.4L1267.9 321.7L1268.1 323.1L1269.2 322.9L1270.5 323.7L1270.6 323.1L1271.5 320.6L1271.8 320.0L1273.1 322.2L1273.8 322.8L1274.4 322.7L1275.7 322.5L1277.0 324.9L1278.4 323.6L1278.8 323.1L1279.7 323.8L1281.0 323.7L1281.2 324.4L1282.3 324.5L1283.6 324.2L1284.9 324.3L1285.0 324.4L1286.2 324.2L1287.5 325.5L1288.8 324.3L1289.4 323.1L1290.1 324.4L1291.5 324.1L1292.8 325.2L1294.1 322.6L1295.4 322.1L1295.6 323.1L1296.7 322.4L1298.0 321.5L1298.1 321.2L1299.3 321.3L1300.6 320.9L1301.9 322.0L1303.1 321.5L1303.2 322.7L1304.6 320.9L1305.9 319.8L1306.2 319.8L1307.2 321.5L1308.5 321.5L1309.4 322.5L1309.8 322.5L1311.1 323.8L1312.4 322.6L1312.5 324.4L1312.8 329.4L1312.8 329.4" fill="none" stroke="#fff" stroke-width="1.15" shape-rendering="crispEdges" stroke-linejoin="miter"/></svg>
<svg style="position:absolute;left:207px;top:524px" width="8" height="14" viewBox="0 0 8 14"><path d="M4 0v12M1 8l3 5 3-5z" stroke="#f00" stroke-width="1.2" fill="#f00"/></svg>
<svg style="position:absolute;left:6px;top:522px" width="16" height="16" viewBox="-8 -8 16 16"><g fill="#757575"><rect x="3.6" y="-1.9" width="3.4" height="3.8" rx="0.8" transform="rotate(0)"/><rect x="3.6" y="-1.9" width="3.4" height="3.8" rx="0.8" transform="rotate(60)"/><rect x="3.6" y="-1.9" width="3.4" height="3.8" rx="0.8" transform="rotate(120)"/><rect x="3.6" y="-1.9" width="3.4" height="3.8" rx="0.8" transform="rotate(180)"/><rect x="3.6" y="-1.9" width="3.4" height="3.8" rx="0.8" transform="rotate(240)"/><rect x="3.6" y="-1.9" width="3.4" height="3.8" rx="0.8" transform="rotate(300)"/></g><circle r="4" fill="none" stroke="#757575" stroke-width="2.9"/></svg>
<div style="position:absolute;left:145px;top:529px;width:3px;height:3px;border-radius:2px;background:#e0e0e0"></div>
<div style="position:absolute;left:1349px;top:520px;width:15px;height:60px;background:#000"></div>
<div style="position:absolute;left:1350px;top:521px;width:13px;height:15px;background:#000;border:1px solid #484848"><svg width="11" height="13" viewBox="0 0 11 13" style="position:absolute;left:0;top:0"><path d="M2 9L5.5 5 9 9z" fill="#484848"/></svg></div>
<div style="position:absolute;left:1350px;top:537px;width:13px;height:38px;background:#484848"></div>
<div style="position:absolute;left:1335px;top:796px;width:13px;height:6px;background:#000;border:1px solid #484848"></div>
<div style="position:absolute;left:1350px;top:796px;width:13px;height:6px;background:#000;border:1px solid #484848"></div>
<div style="position:absolute;left:0;top:794px;width:17px;height:8px;border:1px solid #b00000;background:#000"></div>
<div style="position:absolute;left:18px;top:794px;width:74px;height:8px;background:#b00000;clip-path:polygon(0 0,100% 0,94% 100%,4% 100%)"></div>
<div style="position:absolute;left:89px;top:794px;width:52px;height:8px;background:#a8a8a8;clip-path:polygon(8% 0,92% 0,100% 100%,0 100%)"></div>
<div style="position:absolute;left:137px;top:794px;width:60px;height:8px;background:#a8a8a8;clip-path:polygon(7% 0,96% 0,90% 100%,0 100%)"></div>
<div style="position:absolute;left:200px;top:795px;width:12px;height:6px;border:1px solid #808080;background:#111"></div>
<div style="position:absolute;left:213px;top:795px;width:38px;height:6px;background:#4a4a4a"></div>
<div class="vl" style="left:1364px;top:24px;height:776px;width:1px"></div>
<div class="hl" style="left:1365px;top:52px;width:232px;height:1px"></div>
<div class="hl" style="left:1365px;top:169px;width:232px;height:1px"></div>
<div class="hl" style="left:1365px;top:400px;width:232px;height:1px"></div>
<div class="hl" style="left:1365px;top:422px;width:232px;height:1px"></div>
<svg width="0" height="0" style="position:absolute"><filter id="crisp" x="0" y="0" width="100%" height="100%" color-interpolation-filters="sRGB"><feComponentTransfer><feFuncA type="table" tableValues="0 0 1 1"/></feComponentTransfer></filter></svg>
<div id="tx" style="position:absolute;left:0;top:0;width:1597px;height:800px;filter:url(#crisp)"><span class="t s12 k" style="left:23px;top:4.5px;">系统</span><span class="t s12 k" style="left:66px;top:4.5px;">功能</span><span class="t s12 k" style="left:109px;top:4.5px;">报价</span><span class="t s12 k" style="left:152px;top:4.5px;">分析</span><span class="t s12 k" style="left:192px;top:4.5px;">扩展市场行情</span><span class="t s12 k" style="left:275px;top:4.5px;">在线服务</span><span class="t s12 k" style="left:337px;top:4.5px;">资讯</span><span class="t s12 k" style="left:380px;top:4.5px;">工具</span><span class="t s12 k" style="left:423px;top:4.5px;">帮助</span><span class="t s12 rr" style="left:475px;top:4.5px;">期权</span><span class="t s12 rr" style="left:791px;top:4.5px;word-spacing:2.7px">交易未登录 深证科技</span><span class="t s12 c" style="left:24.5px;top:27.7px;">分时</span><span class="t s12 g" style="left:57.5px;top:27.7px;">1分钟</span><span class="t s12 g" style="left:96.5px;top:27.7px;">5分钟</span><span class="t s12 g" style="left:135.5px;top:27.7px;">15分钟</span><span class="t s12 g" style="left:181.5px;top:27.7px;">30分钟</span><span class="t s12 g" style="left:227.5px;top:27.7px;">60分钟</span><span class="t s12 g" style="left:274.5px;top:27.7px;">日线</span><span class="t s12 g" style="left:308.5px;top:27.7px;">周线</span><span class="t s12 g" style="left:342.5px;top:27.7px;">月线</span><span class="t s12 g" style="left:376px;top:27.7px;">10分钟</span><span class="t s12 g" style="left:422px;top:27.7px;">45日线</span><span class="t s12 g" style="left:468.5px;top:27.7px;">季线</span><span class="t s12 g" style="left:502.5px;top:27.7px;">年线</span><span class="t s12 g" style="left:539px;top:27.7px;">5秒</span><span class="t s12 g" style="left:570px;top:27.7px;">15秒</span><span class="t s12 g" style="left:603px;top:27.7px;">多分时</span><span class="t s12 g" style="left:647px;top:27.7px;">更多 &gt;</span><span class="t s12 g" style="left:1065.5px;transform:translateX(-50%);top:27.7px;">切换</span><span class="t s12 g" style="left:1100px;transform:translateX(-50%);top:27.7px;">叠加</span><span class="t s12 g" style="left:1135px;transform:translateX(-50%);top:27.7px;">重播</span><span class="t s12 g" style="left:1170px;transform:translateX(-50%);top:27.7px;">统计</span><span class="t s12 g" style="left:1205px;transform:translateX(-50%);top:27.7px;">画线</span><span class="t s12 g" style="left:1240px;transform:translateX(-50%);top:27.7px;">F10</span><span class="t s12 g" style="left:1275px;transform:translateX(-50%);top:27.7px;">标记</span><span class="t s12 g" style="left:1310px;transform:translateX(-50%);top:27.7px;">+自选</span><span class="t s12 g" style="left:1346px;transform:translateX(-50%);top:27.7px;">返回</span><span class="t s12 g" style="left:52px;top:49px;">深证科技</span><span class="t s12 w" style="left:106px;top:49px;">闪电图</span><span class="t s12 y" style="left:146px;top:49px;">成交额(万元)</span><span class="t s12 g" style="right:287.5px;top:49.3px;letter-spacing:0.3px">Home放大 End缩小</span><span class="t ax r" style="right:1547.5px;top:58.5px;">8918</span><span class="t ax r" style="left:1316px;top:58.5px;">2.08%</span><span class="t ax r" style="right:1547.5px;top:78.5px;">8892</span><span class="t ax r" style="left:1316px;top:78.5px;">1.78%</span><span class="t ax r" style="right:1547.5px;top:99.5px;">8866</span><span class="t ax r" style="left:1316px;top:99.5px;">1.48%</span><span class="t ax r" style="right:1547.5px;top:120.5px;">8840</span><span class="t ax r" style="left:1316px;top:120.5px;">1.19%</span><span class="t ax r" style="right:1547.5px;top:140.5px;">8814</span><span class="t ax r" style="left:1316px;top:140.5px;">0.89%</span><span class="t ax r" style="right:1547.5px;top:161.5px;">8788</span><span class="t ax r" style="left:1316px;top:161.5px;">0.59%</span><span class="t ax r" style="right:1547.5px;top:182.5px;">8762</span><span class="t ax r" style="left:1316px;top:182.5px;">0.30%</span><span class="t ax w" style="right:1547.5px;top:204px;">8737</span><span class="t ax w" style="left:1316px;top:204px;">0.00%</span><span class="t ax gr" style="right:1547.5px;top:223.5px;">8711</span><span class="t ax gr" style="left:1316px;top:223.5px;">0.30%</span><span class="t ax gr" style="right:1547.5px;top:244.5px;">8685</span><span class="t ax gr" style="left:1316px;top:244.5px;">0.59%</span><span class="t ax gr" style="right:1547.5px;top:265.5px;">8659</span><span class="t ax gr" style="left:1316px;top:265.5px;">0.89%</span><span class="t ax gr" style="right:1547.5px;top:286.5px;">8633</span><span class="t ax gr" style="left:1316px;top:286.5px;">1.19%</span><span class="t ax gr" style="right:1547.5px;top:307.5px;">8607</span><span class="t ax gr" style="left:1316px;top:307.5px;">1.48%</span><span class="t ax gr" style="right:1547.5px;top:328.5px;">8581</span><span class="t ax gr" style="left:1316px;top:328.5px;">1.78%</span><span class="t ax y" style="right:1547.5px;top:350px;">144866</span><span class="t ax y" style="left:1316px;top:350px;">144866</span><span class="t ax y" style="right:1547.5px;top:368.8px;">126757</span><span class="t ax y" style="left:1316px;top:368.8px;">126757</span><span class="t ax y" style="right:1547.5px;top:386.8px;">108649</span><span class="t ax y" style="left:1316px;top:386.8px;">108649</span><span class="t ax y" style="right:1547.5px;top:404.8px;">90541</span><span class="t ax y" style="left:1316px;top:404.8px;">90541</span><span class="t ax y" style="right:1547.5px;top:423.8px;">72433</span><span class="t ax y" style="left:1316px;top:423.8px;">72433</span><span class="t ax y" style="right:1547.5px;top:441.8px;">54325</span><span class="t ax y" style="left:1316px;top:441.8px;">54325</span><span class="t ax y" style="right:1547.5px;top:459.8px;">36216</span><span class="t ax y" style="left:1316px;top:459.8px;">36216</span><span class="t ax y" style="right:1547.5px;top:477.8px;">18108</span><span class="t ax y" style="left:1316px;top:477.8px;">18108</span><span class="t ax r" style="right:1545.7px;top:502.6px;">09:30</span><span class="t ax r" style="right:1227.7px;top:502.6px;">10:30</span><span class="t ax r" style="right:906.7px;top:502.6px;">13:00</span><span class="t ax r" style="right:588.7px;top:502.6px;">14:00</span><span class="t ax r" style="right:285.7px;top:502.6px;">15:00</span><span class="t s14 g" style="left:36px;top:521.6px;">名称(564)</span><span class="t s14 g" style="right:1390.5px;top:521.6px;">涨幅<span style="display:inline-block;width:7px"><span style="display:inline-block;transform:scaleX(.56);transform-origin:0 50%">%</span></span></span><span class="t s14 g" style="right:1317.5px;top:521.6px;">现价</span><span class="t s14 g" style="right:1265px;top:521.6px;">量比</span><span class="t s14 g" style="right:1209px;top:521.6px;">涨速<span style="display:inline-block;width:7px"><span style="display:inline-block;transform:scaleX(.56);transform-origin:0 50%">%</span></span></span><span class="t s14 g" style="right:1117px;top:521.6px;">总市值</span><span class="t s14 g" style="right:1040px;top:521.6px;">3日涨幅<span style="display:inline-block;width:7px"><span style="display:inline-block;transform:scaleX(.56);transform-origin:0 50%">%</span></span></span><span class="t s14 g" style="right:980.5px;top:521.6px;">换手<span style="display:inline-block;width:7px"><span style="display:inline-block;transform:scaleX(.56);transform-origin:0 50%">%</span></span></span><span class="t s14 g" style="right:905.5px;top:521.6px;">市盈(动)</span><span class="t s14 g" style="right:828px;top:521.6px;">主力净额</span><span class="t s14 g" style="right:744.5px;top:521.6px;">主力净比<span style="display:inline-block;width:7px"><span style="display:inline-block;transform:scaleX(.56);transform-origin:0 50%">%</span></span></span><span class="t s14 g" style="right:660px;top:521.6px;">2分钟金额</span><span class="t s14 g" style="right:584.5px;top:521.6px;">涨跌数</span><span class="t s14 g" style="right:524.5px;top:521.6px;">涨停数</span><span class="t s14 g" style="right:465px;top:521.6px;">跌停数</span><span class="t s14 g" style="right:396.5px;top:521.6px;">封单额</span><span class="t s14 g" style="left:1212.5px;top:521.6px;">细分行业</span><span class="t s14 g b" style="left:12.5px;transform:translateX(-50%);top:545px;">1</span><span class="t s16 ny" style="left:34px;top:543.5px">一般零售<span style="font-size:12px;color:#a0a0a0;position:relative;top:2px">(行业)</span></span><span class="t s14 r b" style="right:1384.5px;top:545px;">4.60</span><span class="t s14 r b" style="right:1316.5px;top:545px;">1308.93</span><span class="t s14 r b" style="right:1264.5px;top:545px;">1.31</span><span class="t s14 r b" style="right:1208px;top:545px;">0.11</span><span class="t s16 g" style="right:1116.5px;top:544.6px;">亿</span><span class="t s14 g b" style="right:1132.5px;top:545px;">3471.88</span><span class="t s14 r b" style="right:1039.5px;top:545px;">3.84</span><span class="t s14 g b" style="right:980px;top:545px;">8.73</span><span class="t s14 g" style="right:903.5px;top:543.5px;">–</span><span class="t s16 r" style="right:828px;top:544.6px;">亿</span><span class="t s14 r b" style="right:844px;top:545px;">38.67</span><span class="t s14 r b" style="right:744.5px;top:545px;">1.18</span><span class="t s16 c" style="right:660px;top:544.6px;">亿</span><span class="t s14 c b" style="right:676px;top:545px;">2.5</span><span class="t s14 g b" style="right:584px;top:545px;">37/4</span><span class="t s14 m b" style="right:524px;top:545px;">9</span><span class="t s14 gr b" style="right:464.5px;top:545px;">0</span><span class="t s14 g" style="right:396.5px;top:543.5px;">–</span><span class="t s14 g b" style="left:12.5px;transform:translateX(-50%);top:567px;">2</span><span class="t s16 ny" style="left:34px;top:565.5px">航天装备<span style="font-size:12px;color:#a0a0a0;position:relative;top:2px">(行业)</span></span><span class="t s14 r b" style="right:1384.5px;top:567px;">3.13</span><span class="t s14 r b" style="right:1316.5px;top:567px;">1762.62</span><span class="t s14 r b" style="right:1264.5px;top:567px;">1.52</span><span class="t s14 r b" style="right:1208px;top:567px;">0.03</span><span class="t s16 g" style="right:1116.5px;top:566.6px;">亿</span><span class="t s14 g b" style="right:1132.5px;top:567px;">2577.44</span><span class="t s14 r b" style="right:1039.5px;top:567px;">7.40</span><span class="t s14 g b" style="right:980px;top:567px;">9.99</span><span class="t s14 g b" style="right:903.5px;top:567px;">1059.64</span><span class="t s16 r" style="right:828px;top:566.6px;">亿</span><span class="t s14 r b" style="right:844px;top:567px;">2.69</span><span class="t s14 r b" style="right:744.5px;top:567px;">0.11</span><span class="t s16 c" style="right:660px;top:566.6px;">亿</span><span class="t s14 c b" style="right:676px;top:567px;">1.6</span><span class="t s14 g b" style="right:584px;top:567px;">2/6</span><span class="t s14 r b" style="right:524px;top:567px;">1</span><span class="t s14 gr b" style="right:464.5px;top:567px;">0</span><span class="t s14 g" style="right:396.5px;top:565.5px;">–</span><span class="t s14 g b" style="left:12.5px;transform:translateX(-50%);top:589px;">3</span><span class="t s16 ny" style="left:34px;top:587.5px">酒店餐饮<span style="font-size:12px;color:#a0a0a0;position:relative;top:2px">(行业)</span></span><span class="t s14 r b" style="right:1384.5px;top:589px;">2.69</span><span class="t s14 r b" style="right:1316.5px;top:589px;">691.45</span><span class="t s14 r b" style="right:1264.5px;top:589px;">1.19</span><span class="t s14 gr b" style="right:1208px;top:589px;">-0.06</span><span class="t s16 g" style="right:1116.5px;top:588.6px;">亿</span><span class="t s14 g b" style="right:1132.5px;top:589px;">660.04</span><span class="t s14 r b" style="right:1039.5px;top:589px;">3.47</span><span class="t s14 g b" style="right:980px;top:589px;">3.52</span><span class="t s14 g b" style="right:903.5px;top:589px;">62.98</span><span class="t s16 gr" style="right:828px;top:588.6px;">万</span><span class="t s14 gr b" style="right:844px;top:589px;">-3389</span><span class="t s14 gr b" style="right:744.5px;top:589px;">-0.05</span><span class="t s16 c" style="right:660px;top:588.6px;">亿</span><span class="t s14 c b" style="right:676px;top:589px;">0.2</span><span class="t s14 g b" style="right:584px;top:589px;">9/0</span><span class="t s14 r b" style="right:524px;top:589px;">0</span><span class="t s14 gr b" style="right:464.5px;top:589px;">0</span><span class="t s14 g" style="right:396.5px;top:587.5px;">–</span><span class="t s14 g b" style="left:12.5px;transform:translateX(-50%);top:611px;">4</span><span class="t s16 ny" style="left:34px;top:609.5px">林业<span style="font-size:12px;color:#a0a0a0;position:relative;top:2px">(行业)</span></span><span class="t s14 r b" style="right:1384.5px;top:611px;">1.74</span><span class="t s14 r b" style="right:1316.5px;top:611px;">2642.37</span><span class="t s14 r b" style="right:1264.5px;top:611px;">1.08</span><span class="t s14 gr b" style="right:1208px;top:611px;">-0.43</span><span class="t s16 g" style="right:1116.5px;top:610.6px;">亿</span><span class="t s14 g b" style="right:1132.5px;top:611px;">372.39</span><span class="t s14 r b" style="right:1039.5px;top:611px;">13.67</span><span class="t s14 m b" style="right:980px;top:611px;">21.30</span><span class="t s14 g" style="right:903.5px;top:609.5px;">–</span><span class="t s16 gr" style="right:828px;top:610.6px;">亿</span><span class="t s14 gr b" style="right:844px;top:611px;">-7.32</span><span class="t s14 gr b" style="right:744.5px;top:611px;">-1.99</span><span class="t s16 c" style="right:660px;top:610.6px;">亿</span><span class="t s14 c b" style="right:676px;top:611px;">2.1</span><span class="t s14 g b" style="right:584px;top:611px;">1/3</span><span class="t s14 r b" style="right:524px;top:611px;">0</span><span class="t s14 gr b" style="right:464.5px;top:611px;">0</span><span class="t s14 g" style="right:396.5px;top:609.5px;">–</span><span class="t s14 g b" style="left:12.5px;transform:translateX(-50%);top:633px;">5</span><span class="t s16 ny" style="left:34px;top:631.5px">免税概念<span style="font-size:12px;color:#a0a0a0;position:relative;top:2px">(概念)</span></span><span class="t s14 r b" style="right:1384.5px;top:633px;">1.23</span><span class="t s14 r b" style="right:1316.5px;top:633px;">1372.48</span><span class="t s14 r b" style="right:1264.5px;top:633px;">1.10</span><span class="t s14 r b" style="right:1208px;top:633px;">0.07</span><span class="t s16 g" style="right:1116.5px;top:632.6px;">亿</span><span class="t s14 g b" style="right:1132.5px;top:633px;">10935.45</span><span class="t s14 r b" style="right:1039.5px;top:633px;">1.00</span><span class="t s14 g b" style="right:980px;top:633px;">3.09</span><span class="t s14 g b" style="right:903.5px;top:633px;">141.42</span><span class="t s16 gr" style="right:828px;top:632.6px;">亿</span><span class="t s14 gr b" style="right:844px;top:633px;">-6.58</span><span class="t s14 gr b" style="right:744.5px;top:633px;">-0.06</span><span class="t s16 c" style="right:660px;top:632.6px;">亿</span><span class="t s14 c b" style="right:676px;top:633px;">5.0</span><span class="t s14 g b" style="right:584px;top:633px;">27/22</span><span class="t s14 m b" style="right:524px;top:633px;">5</span><span class="t s14 gr b" style="right:464.5px;top:633px;">0</span><span class="t s14 g" style="right:396.5px;top:631.5px;">–</span><span class="t s14 g b" style="left:12.5px;transform:translateX(-50%);top:655px;">6</span><span class="t s16 ny" style="left:34px;top:653.5px">教育培训<span style="font-size:12px;color:#a0a0a0;position:relative;top:2px">(行业)</span></span><span class="t s14 r b" style="right:1384.5px;top:655px;">1.21</span><span class="t s14 r b" style="right:1316.5px;top:655px;">825.72</span><span class="t s14 r b" style="right:1264.5px;top:655px;">1.08</span><span class="t s14 gr b" style="right:1208px;top:655px;">-0.06</span><span class="t s16 g" style="right:1116.5px;top:654.6px;">亿</span><span class="t s14 g b" style="right:1132.5px;top:655px;">1125.39</span><span class="t s14 r b" style="right:1039.5px;top:655px;">0.65</span><span class="t s14 g b" style="right:980px;top:655px;">4.17</span><span class="t s14 g" style="right:903.5px;top:653.5px;">–</span><span class="t s16 r" style="right:828px;top:654.6px;">亿</span><span class="t s14 r b" style="right:844px;top:655px;">4.71</span><span class="t s14 r b" style="right:744.5px;top:655px;">0.44</span><span class="t s16 c" style="right:660px;top:654.6px;">亿</span><span class="t s14 c b" style="right:676px;top:655px;">0.3</span><span class="t s14 g b" style="right:584px;top:655px;">8/8</span><span class="t s14 r b" style="right:524px;top:655px;">1</span><span class="t s14 gr b" style="right:464.5px;top:655px;">0</span><span class="t s14 g" style="right:396.5px;top:653.5px;">–</span><span class="t s14 g b" style="left:12.5px;transform:translateX(-50%);top:677px;">7</span><span class="t s16 ny" style="left:34px;top:675.5px">汽车服务<span style="font-size:12px;color:#a0a0a0;position:relative;top:2px">(行业)</span></span><span class="t s14 r b" style="right:1384.5px;top:677px;">1.20</span><span class="t s14 r b" style="right:1316.5px;top:677px;">648.71</span><span class="t s14 r b" style="right:1264.5px;top:677px;">1.49</span><span class="t s14 r b" style="right:1208px;top:677px;">0.04</span><span class="t s16 g" style="right:1116.5px;top:676.6px;">亿</span><span class="t s14 g b" style="right:1132.5px;top:677px;">539.85</span><span class="t s14 r b" style="right:1039.5px;top:677px;">0.76</span><span class="t s14 g b" style="right:980px;top:677px;">1.59</span><span class="t s14 g b" style="right:903.5px;top:677px;">40.69</span><span class="t s16 gr" style="right:828px;top:676.6px;">万</span><span class="t s14 gr b" style="right:844px;top:677px;">-95.9</span><span class="t s14 gr b" style="right:744.5px;top:677px;">-0.00</span><span class="t s16 c" style="right:660px;top:676.6px;">亿</span><span class="t s14 c b" style="right:676px;top:677px;">0.1</span><span class="t s14 g b" style="right:584px;top:677px;">3/6</span><span class="t s14 r b" style="right:524px;top:677px;">0</span><span class="t s14 gr b" style="right:464.5px;top:677px;">0</span><span class="t s14 g" style="right:396.5px;top:675.5px;">–</span><span class="t s14 g b" style="left:12.5px;transform:translateX(-50%);top:699px;">8</span><span class="t s16 ny" style="left:34px;top:697.5px">房产服务<span style="font-size:12px;color:#a0a0a0;position:relative;top:2px">(行业)</span></span><span class="t s14 r b" style="right:1384.5px;top:699px;">1.01</span><span class="t s14 r b" style="right:1316.5px;top:699px;">854.15</span><span class="t s14 gr b" style="right:1264.5px;top:699px;">0.94</span><span class="t s14 gr b" style="right:1208px;top:699px;">-0.05</span><span class="t s16 g" style="right:1116.5px;top:698.6px;">亿</span><span class="t s14 g b" style="right:1132.5px;top:699px;">462.16</span><span class="t s14 gr b" style="right:1039.5px;top:699px;">-2.26</span><span class="t s14 g b" style="right:980px;top:699px;">4.31</span><span class="t s14 g b" style="right:903.5px;top:699px;">3239.60</span><span class="t s16 r" style="right:828px;top:698.6px;">亿</span><span class="t s14 r b" style="right:844px;top:699px;">2.04</span><span class="t s14 r b" style="right:744.5px;top:699px;">0.45</span><span class="t s16 c" style="right:660px;top:698.6px;">亿</span><span class="t s14 c b" style="right:676px;top:699px;">0.2</span><span class="t s14 g b" style="right:584px;top:699px;">3/6</span><span class="t s14 r b" style="right:524px;top:699px;">1</span><span class="t s14 gr b" style="right:464.5px;top:699px;">0</span><span class="t s14 g" style="right:396.5px;top:697.5px;">–</span><span class="t s14 g b" style="left:12.5px;transform:translateX(-50%);top:721px;">9</span><span class="t s16 ny" style="left:34px;top:719.5px">胎压监测<span style="font-size:12px;color:#a0a0a0;position:relative;top:2px">(概念)</span></span><span class="t s14 r b" style="right:1384.5px;top:721px;">0.99</span><span class="t s14 r b" style="right:1316.5px;top:721px;">2354.84</span><span class="t s14 r b" style="right:1264.5px;top:721px;">1.60</span><span class="t s14 r b" style="right:1208px;top:721px;">0.01</span><span class="t s16 g" style="right:1116.5px;top:720.6px;">亿</span><span class="t s14 g b" style="right:1132.5px;top:721px;">3665.64</span><span class="t s14 r b" style="right:1039.5px;top:721px;">1.04</span><span class="t s14 g b" style="right:980px;top:721px;">3.70</span><span class="t s14 g b" style="right:903.5px;top:721px;">44.23</span><span class="t s16 r" style="right:828px;top:720.6px;">亿</span><span class="t s14 r b" style="right:844px;top:721px;">2.59</span><span class="t s14 r b" style="right:744.5px;top:721px;">0.07</span><span class="t s16 c" style="right:660px;top:720.6px;">亿</span><span class="t s14 c b" style="right:676px;top:721px;">0.9</span><span class="t s14 g b" style="right:584px;top:721px;">14/15</span><span class="t s14 r b" style="right:524px;top:721px;">3</span><span class="t s14 gr b" style="right:464.5px;top:721px;">0</span><span class="t s14 g" style="right:396.5px;top:719.5px;">–</span><span class="t s14 g b" style="left:12.5px;transform:translateX(-50%);top:743px;">10</span><span class="t s16 ny" style="left:34px;top:741.5px">动物保健<span style="font-size:12px;color:#a0a0a0;position:relative;top:2px">(行业)</span></span><span class="t s14 r b" style="right:1384.5px;top:743px;">0.98</span><span class="t s14 r b" style="right:1316.5px;top:743px;">874.83</span><span class="t s14 gr b" style="right:1264.5px;top:743px;">0.93</span><span class="t s14 r b" style="right:1208px;top:743px;">0.22</span><span class="t s16 g" style="right:1116.5px;top:742.6px;">亿</span><span class="t s14 g b" style="right:1132.5px;top:743px;">795.74</span><span class="t s14 r b" style="right:1039.5px;top:743px;">3.14</span><span class="t s14 g b" style="right:980px;top:743px;">2.14</span><span class="t s14 g b" style="right:903.5px;top:743px;">52.86</span><span class="t s16 gr" style="right:828px;top:742.6px;">万</span><span class="t s14 gr b" style="right:844px;top:743px;">-2659</span><span class="t s14 gr b" style="right:744.5px;top:743px;">-0.04</span><span class="t s16 c" style="right:660px;top:742.6px;">亿</span><span class="t s14 c b" style="right:676px;top:743px;">0.3</span><span class="t s14 g b" style="right:584px;top:743px;">5/8</span><span class="t s14 r b" style="right:524px;top:743px;">0</span><span class="t s14 gr b" style="right:464.5px;top:743px;">0</span><span class="t s14 g" style="right:396.5px;top:741.5px;">–</span><span class="t s14 g b" style="left:12.5px;transform:translateX(-50%);top:765px;">11</span><span class="t s16 ny" style="left:34px;top:763.5px">次新预增<span style="font-size:12px;color:#a0a0a0;position:relative;top:2px">(风格)</span></span><span class="t s14 r b" style="right:1384.5px;top:765px;">0.91</span><span class="t s14 r b" style="right:1316.5px;top:765px;">2031.90</span><span class="t s14 r b" style="right:1264.5px;top:765px;">1.36</span><span class="t s14 gr b" style="right:1208px;top:765px;">-0.01</span><span class="t s16 g" style="right:1116.5px;top:764.6px;">亿</span><span class="t s14 g b" style="right:1132.5px;top:765px;">287.37</span><span class="t s14 r b" style="right:1039.5px;top:765px;">1.45</span><span class="t s14 g b" style="right:980px;top:765px;">7.69</span><span class="t s14 g b" style="right:903.5px;top:765px;">73.95</span><span class="t s16 r" style="right:828px;top:764.6px;">万</span><span class="t s14 r b" style="right:844px;top:765px;">1615</span><span class="t s14 r b" style="right:744.5px;top:765px;">0.26</span><span class="t s16 c" style="right:660px;top:764.6px;">亿</span><span class="t s14 c b" style="right:676px;top:765px;">0.1</span><span class="t s14 g b" style="right:584px;top:765px;">2/2</span><span class="t s14 r b" style="right:524px;top:765px;">0</span><span class="t s14 gr b" style="right:464.5px;top:765px;">0</span><span class="t s14 g" style="right:396.5px;top:763.5px;">–</span><span class="t b" style="left:30px;top:796.5px;font-size:13px;line-height:14px;color:#fff">关联品种</span><span class="t b" style="left:98px;top:796.5px;font-size:12px;line-height:14px;color:#000">成份股</span><span class="t b" style="left:148px;top:796.5px;font-size:12px;line-height:14px;color:#000">自选股</span><span class="t yy" style="left:1401px;top:28px;font-size:16px;line-height:18px"><b style="font-size:14px">399339</b> 深证科技</span><span class="t s16 g" style="left:1367px;top:54.6px;">Ａ股成交</span><span class="t s16 y" style="right:3px;top:54.6px;">亿</span><span class="t s14 y b" style="right:19px;top:55px;">9908.20</span><span class="t s16 g" style="left:1367px;top:73.6px;">Ｂ股成交</span><span class="t s16 y" style="right:3px;top:73.6px;">亿</span><span class="t s14 y b" style="right:19px;top:74px;">0.59</span><span class="t s16 g" style="left:1367px;top:92.6px;">国债成交</span><span class="t s16 y" style="right:3px;top:92.6px;">亿</span><span class="t s14 y b" style="right:19px;top:93px;">2813.38</span><span class="t s16 g" style="left:1367px;top:111.6px;">基金成交</span><span class="t s16 y" style="right:3px;top:111.6px;">亿</span><span class="t s14 y b" style="right:19px;top:112px;">1384.35</span><span class="t s16 g" style="left:1367px;top:130.6px;">债券成交</span><span class="t s16 y" style="right:3px;top:130.6px;">亿</span><span class="t s14 y b" style="right:19px;top:131px;">344.30</span><span class="t s16 g" style="left:1367px;top:149.6px;">权证成交</span><span class="t s16 g" style="left:1367px;top:171.6px;">最新指数</span><span class="t s14 gr b" style="right:3px;top:172px;">8588.59</span><span class="t s16 g" style="left:1367px;top:190.6px;">今日开盘</span><span class="t s14 gr b" style="right:3px;top:191px;">8712.68</span><span class="t s16 g" style="left:1367px;top:209.6px;">昨日收盘</span><span class="t s14 w b" style="right:3px;top:210px;">8736.52</span><span class="t s16 g" style="left:1367px;top:228.6px;">指数涨跌</span><span class="t s14 gr b" style="right:3px;top:229px;">-147.93</span><span class="t s16 g" style="left:1367px;top:247.6px;">指数涨幅</span><span class="t s14 gr b" style="right:3px;top:248px;">-1.69%</span><span class="t s16 g" style="left:1367px;top:266.6px;">指数振幅</span><span class="t s14 g b" style="right:3px;top:267px;">192.68/2.21%</span><span class="t s16 g" style="left:1367px;top:285.6px;">总成交额</span><span class="t s16 y" style="right:3px;top:285.6px;">亿</span><span class="t s14 y b" style="right:19px;top:286px;">1468.57</span><span class="t s16 g" style="left:1367px;top:304.6px;">总成交量</span><span class="t s16 y" style="right:3px;top:304.6px;">万</span><span class="t s14 y b" style="right:19px;top:305px;">4005.9</span><span class="t s16 g" style="left:1367px;top:323.6px;">最高指数</span><span class="t s14 r b" style="right:3px;top:324px;">8747.70</span><span class="t s16 g" style="left:1367px;top:342.6px;">最低指数</span><span class="t s14 gr b" style="right:3px;top:343px;">8555.02</span><span class="t s16 g" style="left:1367px;top:361.6px;">指数量比</span><span class="t s14 gr b" style="right:3px;top:362px;">0.92</span><span class="t s16 g" style="left:1367px;top:380.6px;">深证换手</span><span class="t s14 g b" style="right:3px;top:381px;">2.78%</span><span class="t s16 g" style="left:1367px;top:402.6px;">涨家数</span><span class="t s16 g" style="left:1484px;top:402.6px;">跌家数</span><span class="t s14 g b" style="left:1367px;top:425px;">14:56</span><span class="t s14 gr b" style="left:1446.5px;top:425px;">8597.41</span><span class="t s16 y" style="right:3px;top:424.6px;">万</span><span class="t s14 y b" style="right:19px;top:425px;">4894</span><span class="t s14 g b" style="left:1367px;top:443px;">14:56</span><span class="t s14 gr b" style="left:1446.5px;top:443px;">8596.98</span><span class="t s16 y" style="right:3px;top:442.6px;">万</span><span class="t s14 y b" style="right:19px;top:443px;">5358</span><span class="t s14 g b" style="left:1367px;top:461px;">14:56</span><span class="t s14 gr b" style="left:1446.5px;top:461px;">8598.07</span><span class="t s16 y" style="right:3px;top:460.6px;">万</span><span class="t s14 y b" style="right:19px;top:461px;">4633</span><span class="t s14 g b" style="left:1367px;top:479px;">14:56</span><span class="t s14 gr b" style="left:1446.5px;top:479px;">8596.20</span><span class="t s16 y" style="right:3px;top:478.6px;">万</span><span class="t s14 y b" style="right:19px;top:479px;">4422</span><span class="t s14 g b" style="left:1367px;top:497px;">14:56</span><span class="t s14 gr b" style="left:1446.5px;top:497px;">8597.30</span><span class="t s16 y" style="right:3px;top:496.6px;">万</span><span class="t s14 y b" style="right:19px;top:497px;">4348</span><span class="t s14 g b" style="left:1367px;top:515px;">14:56</span><span class="t s14 gr b" style="left:1446.5px;top:515px;">8596.56</span><span class="t s16 y" style="right:3px;top:514.6px;">万</span><span class="t s14 y b" style="right:19px;top:515px;">3956</span><span class="t s14 g b" style="left:1367px;top:533px;">14:56</span><span class="t s14 gr b" style="left:1446.5px;top:533px;">8595.63</span><span class="t s16 y" style="right:3px;top:532.6px;">万</span><span class="t s14 y b" style="right:19px;top:533px;">4214</span><span class="t s14 g b" style="left:1367px;top:551px;">14:56</span><span class="t s14 gr b" style="left:1446.5px;top:551px;">8594.98</span><span class="t s16 y" style="right:3px;top:550.6px;">万</span><span class="t s14 y b" style="right:19px;top:551px;">4366</span><span class="t s14 g b" style="left:1367px;top:569px;">14:56</span><span class="t s14 gr b" style="left:1446.5px;top:569px;">8595.66</span><span class="t s16 y" style="right:3px;top:568.6px;">万</span><span class="t s14 y b" style="right:19px;top:569px;">4992</span><span class="t s14 g b" style="left:1367px;top:587px;">14:56</span><span class="t s14 gr b" style="left:1446.5px;top:587px;">8594.92</span><span class="t s16 y" style="right:3px;top:586.6px;">万</span><span class="t s14 y b" style="right:19px;top:587px;">4337</span><span class="t s14 g b" style="left:1367px;top:605px;">14:56</span><span class="t s14 gr b" style="left:1446.5px;top:605px;">8594.58</span><span class="t s16 y" style="right:3px;top:604.6px;">万</span><span class="t s14 y b" style="right:19px;top:605px;">4681</span><span class="t s14 g b" style="left:1367px;top:623px;">14:56</span><span class="t s14 gr b" style="left:1446.5px;top:623px;">8594.43</span><span class="t s16 y" style="right:3px;top:622.6px;">万</span><span class="t s14 y b" style="right:19px;top:623px;">4869</span><span class="t s14 g b" style="left:1367px;top:641px;">14:56</span><span class="t s14 gr b" style="left:1446.5px;top:641px;">8594.22</span><span class="t s16 y" style="right:3px;top:640.6px;">万</span><span class="t s14 y b" style="right:19px;top:641px;">3624</span><span class="t s14 g b" style="left:1367px;top:659px;">14:56</span><span class="t s14 gr b" style="left:1446.5px;top:659px;">8594.73</span><span class="t s16 y" style="right:3px;top:658.6px;">万</span><span class="t s14 y b" style="right:19px;top:659px;">3769</span><span class="t s14 g b" style="left:1367px;top:677px;">14:56</span><span class="t s14 gr b" style="left:1446.5px;top:677px;">8594.16</span><span class="t s16 y" style="right:3px;top:676.6px;">万</span><span class="t s14 y b" style="right:19px;top:677px;">3125</span><span class="t s14 g b" style="left:1367px;top:695px;">14:56</span><span class="t s14 gr b" style="left:1446.5px;top:695px;">8594.62</span><span class="t s16 y" style="right:3px;top:694.6px;">万</span><span class="t s14 y b" style="right:19px;top:695px;">3273</span><span class="t s14 g b" style="left:1367px;top:713px;">14:56</span><span class="t s14 gr b" style="left:1446.5px;top:713px;">8595.07</span><span class="t s16 y" style="right:3px;top:712.6px;">万</span><span class="t s14 y b" style="right:19px;top:713px;">4119</span><span class="t s14 g b" style="left:1367px;top:731px;">14:57</span><span class="t s14 gr b" style="left:1446.5px;top:731px;">8594.87</span><span class="t s16 y" style="right:3px;top:730.6px;">万</span><span class="t s14 y b" style="right:19px;top:731px;">2276</span><span class="t s14 g b" style="left:1367px;top:749px;">14:57</span><span class="t s14 gr b" style="left:1446.5px;top:749px;">8594.88</span><span class="t s16 y" style="right:3px;top:748.6px;">万</span><span class="t s14 y b" style="right:19px;top:749px;">29.00</span><span class="t s14 g b" style="left:1367px;top:767px;">15:00</span><span class="t s14 gr b" style="left:1446.5px;top:767px;">8588.58</span><span class="t s16 y" style="right:3px;top:766.6px;">亿</span><span class="t s14 y b" style="right:19px;top:767px;">13.2</span><span class="t s14 g b" style="left:1367px;top:785px;">15:00</span><span class="t s14 gr b" style="left:1446.5px;top:785px;">8588.59</span><span class="t s16 y" style="right:3px;top:784.6px;">亿</span><span class="t s14 y b" style="right:19px;top:785px;">2.86</span></div>
</body></html>
